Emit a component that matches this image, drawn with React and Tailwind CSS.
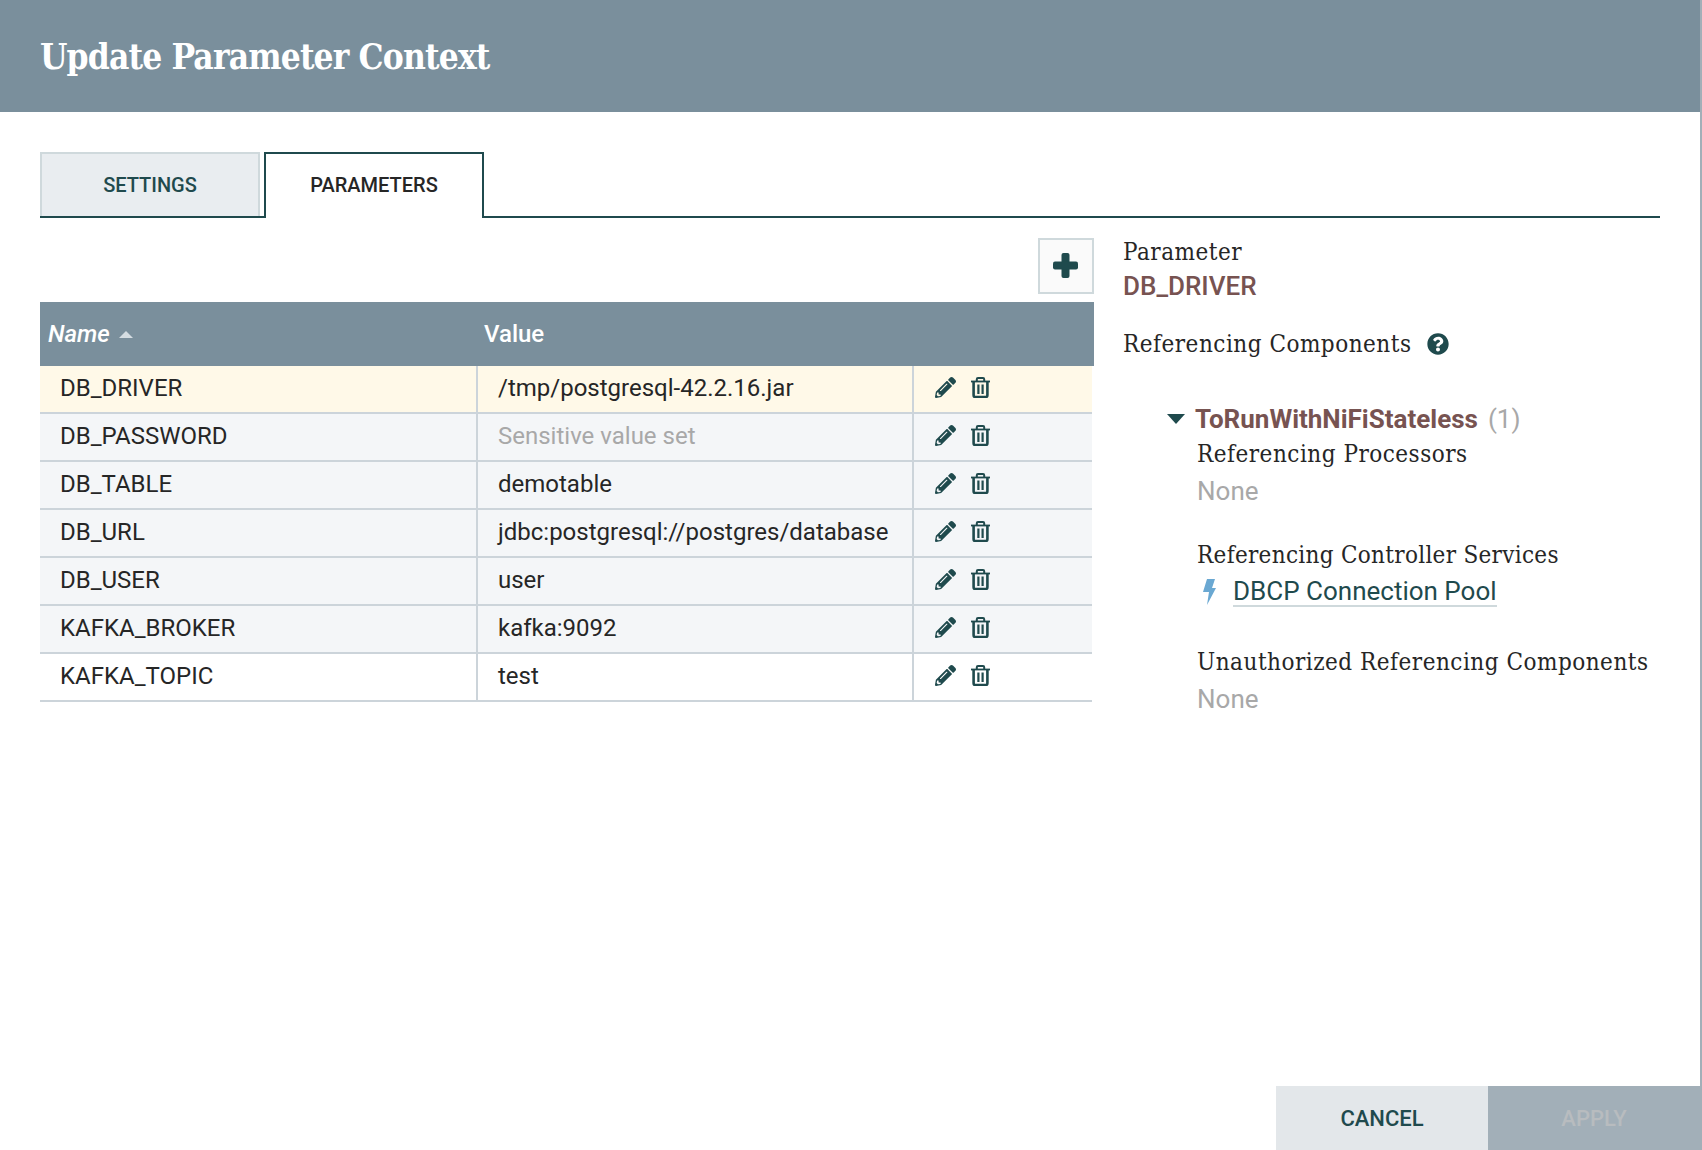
import React from 'react';
import { FaPencilAlt, FaQuestionCircle } from 'react-icons/fa';

const rows = [
  { name: 'DB_DRIVER', value: '/tmp/postgresql-42.2.16.jar', selected: true },
  { name: 'DB_PASSWORD', value: 'Sensitive value set', sensitive: true },
  { name: 'DB_TABLE', value: 'demotable' },
  { name: 'DB_URL', value: 'jdbc:postgresql://postgres/database' },
  { name: 'DB_USER', value: 'user' },
  { name: 'KAFKA_BROKER', value: 'kafka:9092' },
  { name: 'KAFKA_TOPIC', value: 'test', white: true },
];

const slab = "font-['DejaVu_Serif_Condensed','DejaVu_Serif',serif]";
const label = `${slab} text-[24px] leading-[28px] text-[#262626] tracking-[0.5px]`;

const TrashIcon = () => (
  <svg viewBox="0 0 19 21" className="w-[19px] h-[21px]" fill="none" stroke="currentColor">
    <path d="M0 4.5h19" strokeWidth="1.8" />
    <path d="M5.8 4V2.2C5.8 1.4 6.4 1 7 1h5c.6 0 1.2.4 1.2 1.2V4" strokeWidth="2" />
    <path d="M2.6 4.5v13.8c0 1 .7 1.7 1.6 1.7h10.6c.9 0 1.6-.7 1.6-1.7V4.5" strokeWidth="2.6" />
    <path d="M7.4 7.5v9.5M11.6 7.5v9.5" strokeWidth="2.2" />
  </svg>
);

const Row = ({ row }) => (
  <div
    className={`flex h-[48px] border-b-2 border-[#ccd4da] text-[24px] text-[#262626] ${
      row.selected ? 'bg-[#fff9e8]' : row.white ? 'bg-white' : 'bg-[#f4f6f8]'
    }`}
  >
    <div className="w-[436px] flex items-center pl-[20px] pb-[2px]">{row.name}</div>
    <div
      className={`w-[436px] flex items-center pl-[20px] pb-[2px] border-l-2 border-[#ccd4da] ${
        row.sensitive ? 'text-[#a8a8a8]' : ''
      }`}
    >
      {row.value}
    </div>
    <div className="flex-1 flex items-center pl-[21px] pb-[3px] gap-[15px] border-l-2 border-[#ccd4da] text-[#1f4a4d]">
      <FaPencilAlt className="w-[21px] h-[21px]" />
      <TrashIcon />
    </div>
  </div>
);

export default function App() {
  return (
    <div className="relative h-[1150px] w-[1702px] flex flex-col bg-white font-['Roboto',sans-serif] overflow-hidden border-r-2 border-[#a2afb8]">
      <header className="h-[112px] shrink-0 bg-[#7a8f9c] flex items-center pl-[40px] pt-[2px] -mr-[2px]">
        <h1 className={`${slab} text-[35px] font-bold text-white tracking-[-0.85px]`}>Update Parameter Context</h1>
      </header>

      {/* Tabs */}
      <div className="mt-[40px] mx-[40px] h-[66px] flex items-start border-b-2 border-[#1f4a4d]">
        <div className="w-[220px] h-[64px] flex items-center justify-center bg-[#e9edf0] border-2 border-b-0 border-[#cfd9dc] text-[20px] font-medium text-[#1f4a4d]">
          SETTINGS
        </div>
        <div className="ml-[4px] w-[220px] h-[66px] flex items-center justify-center pb-[2px] bg-white border-2 border-b-0 border-[#1f4a4d] text-[20px] font-medium text-[#262626]">
          PARAMETERS
        </div>
      </div>

      <div className="flex ml-[40px] mt-[20px] flex-1 min-h-0">
        {/* Table */}
        <div className="w-[1054px] shrink-0">
          <div className="flex justify-end">
            <button className="w-[56px] h-[56px] flex items-center justify-center pb-[1px] pr-[1px] bg-[#fafafa] border-2 border-[#cfd9dc] text-[#1f4a4d]">
              <svg viewBox="0 0 25 25" className="w-[25px] h-[25px]" fill="currentColor">
                <rect x="8.5" y="0" width="8" height="25" rx="2" />
                <rect x="0" y="8.5" width="25" height="8" rx="2" />
              </svg>
            </button>
          </div>
          <div className="mt-[8px] h-[64px] bg-[#7a8f9c] flex items-center text-[24px] font-medium text-white">
            <div className="w-[442px] pl-[8px] flex items-center gap-[9px] italic">
              Name
              <span className="w-0 h-0 border-x-[7px] border-x-transparent border-b-[7px] border-b-[#d5dde2]" />
            </div>
            <div className="pl-[2px]">Value</div>
          </div>
          <div className="w-[1052px]">
            {rows.map((r) => (
              <Row key={r.name} row={r} />
            ))}
          </div>
        </div>

        {/* Referencing details */}
        <aside className="ml-[29px] flex-1 text-[26px]">
          <div className={label}>Parameter</div>
          <div className="mt-[6px] leading-[28px] font-medium text-[#775351]">DB_DRIVER</div>
          <div className={`mt-[30px] flex items-center ${label}`}>
            Referencing Components
            <FaQuestionCircle className="ml-[15px] w-[22px] h-[22px] text-[#1f4a4d]" />
          </div>

          <div className="mt-[47px] ml-[44px] flex items-center leading-[28px]">
            <span className="w-0 h-0 border-x-[9px] border-x-transparent border-t-[10px] border-t-[#1f4a4d]" />
            <span className="ml-[10px] font-bold text-[#775351]">ToRunWithNiFiStateless</span>
            <span className="ml-[10px] text-[#a8a8a8]">(1)</span>
          </div>
          <div className="ml-[74px]">
            <div className={`mt-[7px] ${label}`}>Referencing Processors</div>
            <div className="mt-[9px] leading-[28px] text-[#a8a8a8]">None</div>
            <div className={`mt-[36px] ${slab} text-[24px] leading-[28px] text-[#262626] tracking-[0.3px]`}>Referencing Controller Services</div>
            <div className="mt-[8px] ml-[5px] flex items-center leading-[28px]">
              <svg viewBox="0 0 14 26" className="w-[14px] h-[26px] fill-[#6aa8d2]">
                <path d="M5 0h8l-3 9h4L5 26l2-13H1z" />
              </svg>
              <span className="ml-[17px] border-b-2 border-[#cfd9dc] text-[#1f4a4d]">DBCP Connection Pool</span>
            </div>
            <div className={`mt-[41px] ${label}`}>Unauthorized Referencing Components</div>
            <div className="mt-[9px] leading-[28px] text-[#a8a8a8]">None</div>
          </div>
        </aside>
      </div>

      {/* Footer buttons */}
      <div className="flex justify-end shrink-0">
        <button className="w-[212px] h-[64px] bg-[#e3e7ea] text-[22px] font-medium text-[#1f4a4d]">CANCEL</button>
        <button className="w-[212px] h-[64px] bg-[#a2afb8] text-[22px] font-medium text-[#b8bcbf]">APPLY</button>
      </div>
    </div>
  );
}
